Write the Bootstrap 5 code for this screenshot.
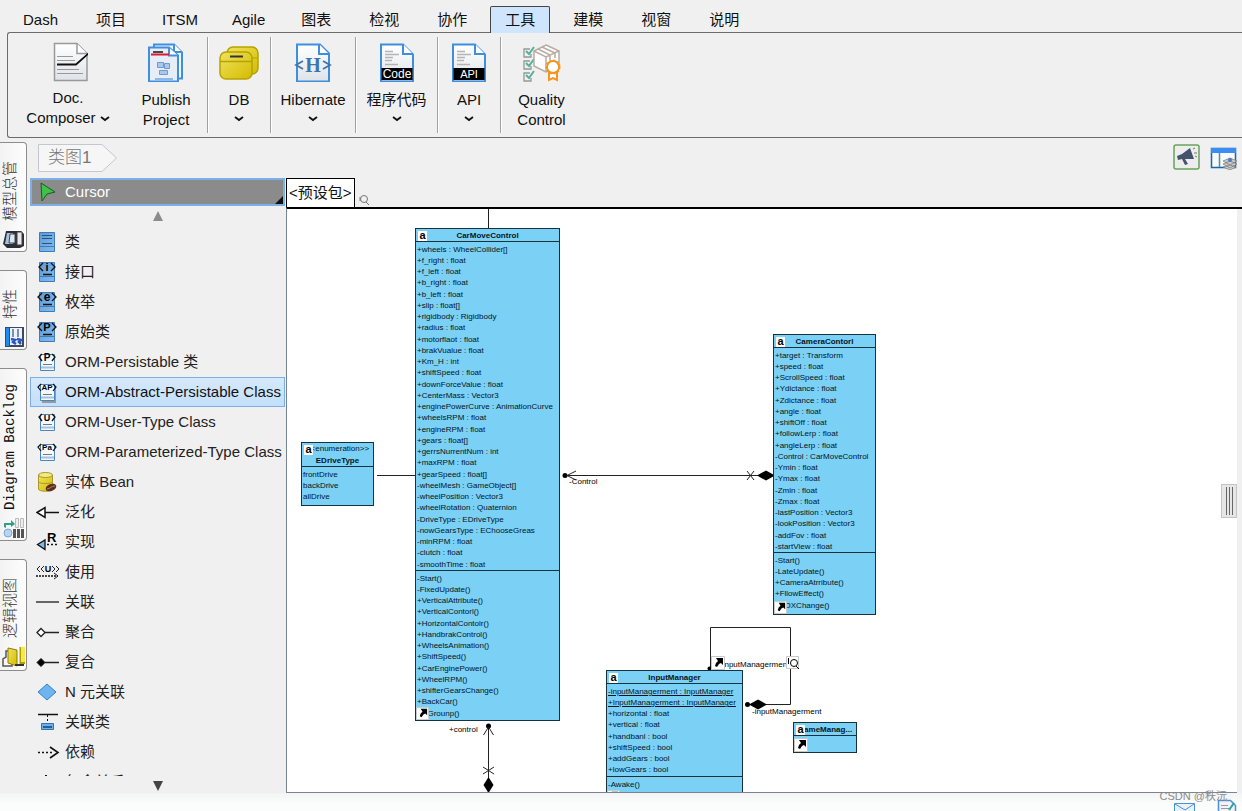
<!DOCTYPE html>
<html lang="zh-CN">
<head>
<meta charset="utf-8">
<meta name="viewport" content="width=device-width, initial-scale=1">
<title>类图1</title>
<link href="https://cdn.jsdelivr.net/npm/bootstrap@5.3.0/dist/css/bootstrap.min.css" rel="stylesheet">
<style>
  body { font-family: "Liberation Sans", "Noto Sans CJK SC", sans-serif; font-size: 15px; line-height: 20px; color: #111; background: #f0f0f0; }
  button { color: inherit; }
  .fill { min-height: 0; min-width: 0; }

  /* menu bar */
  .menubar { height: 33px; padding: 6px 8px 0; position: relative; z-index: 1; }
  .menu-btn { border: 1px solid transparent; border-bottom: 0; background: none; padding: 3px 14px; height: 27px; line-height: 20px; }
  .menu-btn.tight { padding: 3px 12px; }
  .menu-btn.active { background: #cfe5fd; border-color: #444; border-radius: 2px 2px 0 0; }

  /* ribbon */
  .ribbon { height: 106px; margin: -1px 0 0 7px; border: 1px solid #6b6b6b; border-right: 0; border-radius: 3px 0 0 3px; }
  .tool-group { margin: 4px 0; border-right: 1px solid #a0a0a0; box-shadow: 1px 0 #fff; }
  .tool-group:last-child { border: 0; box-shadow: none; }
  .tool { border: 0; background: none; padding: 5px 0 0; }
  .tool svg { display: block; margin: 0 auto 8px; }
  .tool .chev { display: inline-block; margin: 0; vertical-align: 2px; }
  .tool-s { width: 62px; } .tool-m { width: 81px; } .tool-l { width: 84px; }
  .tool-doc { width: 120px; } .tool-doc svg.pic { margin-bottom: 6px; }
  .tool-doc .chev { vertical-align: 0; }
  .tool-pub { width: 79px; padding-right: 3px; }

  /* side tabs */
  .side { width: 30px; padding-top: 4px; gap: 18px; }
  .side-tab { width: 27px; border: 1px solid #8c8c8c; border-left: 0; border-radius: 0 4px 4px 0; background: linear-gradient(90deg, #f3f3f3, #fdfdfd); padding: 18px 0 0; display: flex; flex-direction: column; justify-content: flex-end; align-items: center; color: #333; }
  .side-tab.long { padding-top: 15px; }
  .side-tab span { writing-mode: vertical-rl; text-orientation: sideways; transform: rotate(180deg); line-height: 20px; margin-right: 6px; font-weight: 300; }
  .side-tab svg { margin: 8px 0 2px; flex: none; }
  .side-tab .latin { font-family: "Liberation Mono", monospace; font-size: 14px; font-weight: 400; color: #111; }

  /* palette */
  .palette { width: 256px; padding-right: 1px; min-height: 0; }
  .cursor-btn { height: 28px; border: 2px solid #7cafe8; background: #8b8b8b; color: #fff; padding: 0 0 0 4px; position: relative; }
  .cursor-btn::after { content: ""; position: absolute; right: 0; bottom: 0; border: 4px solid #111; border-top-color: transparent; border-left-color: transparent; }
  .palette-list { min-height: 0; overflow: hidden; }
  .palette-item { height: 30px; flex: none; border: 1px solid transparent; background: none; padding: 0 0 0 5px; gap: 5px; text-align: left; white-space: nowrap; color: #222; }
  .palette-item.active { background: linear-gradient(#d6e9fc, #c3dffb); border-color: #7cafe8; color: #111; }
  .palette svg text { font-weight: 700; }

  /* header of the drawing area */
  .crumb-row { height: 40px; padding: 6px 5px 0 8px; }
  .crumb { width: 80px; height: 28px; color: #777; font-size: 17px; line-height: 28px; padding-left: 10px; text-decoration: none; position: relative; }
  .crumb svg { position: absolute; inset: 0; }
  .crumb span { position: relative; font-weight: 300; }
  .pkg-tab { border: 1px solid #000; border-bottom: 0; background: #fff; height: 29px; padding: 0 2px; line-height: 28px; }
  .stage { border: 1px solid #7a8594; border-top: 2px solid #000; border-right: 0; background: #fff; overflow: hidden; position: relative; }
  .strip { width: 5px; background: #f0f0f0; border-top: 2px solid #000; }
  .grip { position: absolute; right: 0; top: 275px; width: 16px; height: 34px; background: #e6e6e6; border: 1px solid #c4c4c4; display: flex; justify-content: center; gap: 2px; padding: 2px; }
  .grip i { width: 1px; background: #666; }

  /* class diagram */
  .wires { position: absolute; left: 0; top: 0; overflow: visible; }
  .wires text { font-size: 8px; fill: #000; }
  .uml { position: absolute; background: #7ad0f5; border: 1px solid #17323f; font-size: 8px; line-height: 11px; color: #04151f; }
  .uml h2 { font-size: 8px; font-weight: 700; line-height: 14px; height: 13px; margin: 0; text-align: center; border-bottom: 1px solid #17323f; }
  .uml h2.typed { height: 24px; line-height: 12px; }
  .uml h2 small { display: block; font-size: 8px; font-weight: 400; }
  .uml ul { list-style: none; margin: 0; padding: 2px 1px 0; white-space: nowrap; }
  .uml ul + ul { border-top: 1px solid #17323f; }
  .uml li { height: 11px; }
  .uml li:nth-child(4n) { height: 12px; }
  .tag { position: absolute; left: 2px; top: 2px; width: 9px; height: 10px; background: #fff; color: #000; font: 700 11px/9px "Liberation Sans", sans-serif; text-align: center; }
  .jump { position: absolute; left: 0; bottom: 0; }
  #car { left: 128px; top: 19px; width: 145px; padding-bottom: 1px; }
  #camera { left: 486px; top: 125px; width: 103px; padding-bottom: 3px; }
  #input { left: 319px; top: 461px; width: 137px; padding-bottom: 13px; }
  #drive { left: 14px; top: 233px; width: 73px; padding-bottom: 3px; }
  #game { left: 506px; top: 513px; width: 64px; height: 31px; }

  /* status bar */
  .statusbar { height: 18px; flex: none; background: linear-gradient(#f4f4f4, #fbfcfc 60%); position: relative; }
  .statusbar .pics { position: absolute; right: 3px; top: 6px; gap: 21px; }
  .credit { position: absolute; right: 15px; top: -5px; font-size: 11px; line-height: 16px; color: #8a8a8a; }
</style>
</head>
<body class="vh-100 d-flex flex-column overflow-hidden">

<svg class="position-absolute" width="0" height="0" aria-hidden="true">
  <defs>
    <linearGradient id="gPage" x1="0" y1="0" x2="0" y2="1"><stop offset="0" stop-color="#fff"/><stop offset="1" stop-color="#dfe3e8"/></linearGradient>
    <linearGradient id="gBlue" x1="0" y1="0" x2="1" y2="1"><stop offset="0" stop-color="#5b9ad6"/><stop offset="1" stop-color="#86bcec"/></linearGradient>
    <linearGradient id="gYellow" x1="0" y1="0" x2="1" y2="1"><stop offset="0" stop-color="#efe25e"/><stop offset="1" stop-color="#d4bc00"/></linearGradient>
    <symbol id="box" viewBox="0 0 24 24"><path d="M3.5 2.5h15v19h-15z" fill="url(#gBlue)" stroke="#3c7cbc"/><path d="M4 16.500h14" stroke="#3c7cbc"/></symbol>
    <symbol id="orm" viewBox="0 0 24 24"><path d="M4.500 4.500h14v16h-14z" fill="#f4f8fc" stroke="#4d86bd"/><path d="M5 17.500h13" stroke="#9dc3e6" stroke-width="2"/><path d="M7 14.500h9" stroke="#777"/></symbol>
    <symbol id="chev" viewBox="0 0 10 8"><path d="M1 2l4 3 4-3" fill="none" stroke="#111" stroke-width="1.800"/></symbol>
    <symbol id="jump" viewBox="0 0 14 14"><path d="M.5.5h13v13H.5z" fill="#fff" stroke="#c8c8c8"/><path d="M5 2h7v7l-2-2-2 1-2 3-2-1 1-3 2-2z"/></symbol>
  </defs>
</svg>

<nav class="menubar d-flex gap-2 flex-shrink-0">
  <button class="menu-btn">Dash</button><button class="menu-btn">项目</button><button class="menu-btn tight">ITSM</button><button class="menu-btn tight">Agile</button><button class="menu-btn">图表</button><button class="menu-btn">检视</button><button class="menu-btn">协作</button><button class="menu-btn active">工具</button><button class="menu-btn">建模</button><button class="menu-btn">视窗</button><button class="menu-btn">说明</button>
</nav>

<header class="ribbon d-flex flex-shrink-0">
  <div class="tool-group d-flex align-items-start">
    <button class="tool tool-doc">
      <svg class="pic" width="40" height="40"><path d="M6.500 1.500H29l10 10v27H6.500z" fill="url(#gPage)" stroke="#999" stroke-width="1.500"/><path d="M29 1.500v10h10" fill="#fff" stroke="#999" stroke-width="1.500"/><path d="M9 14.500h16M9 18.500h18M9 27.500h22M9 31.500h26" stroke="#999"/><path d="M9 22.500h19L41 11" fill="none" stroke="#111" stroke-width="1.800"/></svg>
      Doc.<br>Composer <svg class="chev" width="10" height="8"><use href="#chev"/></svg>
    </button>
    <button class="tool tool-pub">
      <svg width="40" height="40"><path d="M8 2.500h20l8 8v26H8z" fill="#f2f6fb" stroke="#3f8fdf" stroke-width="2"/><path d="M28 2v8h8" fill="#fff" stroke="#3f8fdf" stroke-width="2"/><path d="M3 5.500h20l9 8v26H3z" fill="#e6edf6" stroke="#3f8fdf" stroke-width="2"/><path d="M23 5.500v8h9" fill="#fff" stroke="#3f8fdf" stroke-width="2"/><path d="M5 12.500h18" stroke="#e0182d" stroke-width="2"/><path d="M7 10h10" stroke="#111" stroke-width="1.500"/><path d="M11.500 20.500h6v5h-6zM18.500 21.500h5v5h-5zM13.500 28.500h8v4h-8z" fill="#a9c8ea" stroke="#6d9bd0"/><path d="M9 37h18" stroke="#8db8e4" stroke-width="2"/></svg>
      Publish<br>Project
    </button>
  </div>
  <div class="tool-group d-flex align-items-start"><button class="tool tool-s">
    <svg width="40" height="40"><rect x="8" y="5" width="31" height="27" rx="6" fill="url(#gYellow)" stroke="#b7a300" stroke-width="1.500"/><path d="M8 16h30" stroke="#b7a300"/><rect x="1" y="10" width="32" height="27" rx="6" fill="url(#gYellow)" stroke="#b7a300" stroke-width="1.500"/><path d="M1 19.500h32" stroke="#b7a300" stroke-width="1.500"/><path d="M11 14.500h13" stroke="#333" stroke-width="2"/></svg>
    DB<br><svg class="chev" width="10" height="8"><use href="#chev"/></svg></button></div>
  <div class="tool-group d-flex align-items-start"><button class="tool tool-l">
    <svg width="40" height="40"><path d="M4 2.500h23l9 9v28H4z" fill="url(#gPage)" stroke="#3f8fdf" stroke-width="2"/><path d="M26 2v10h10" fill="#fff" stroke="#3f8fdf" stroke-width="2"/><text x="20" y="30" text-anchor="middle" font-family="Liberation Serif, serif" font-weight="700" font-size="20" fill="#3f74ad">H</text><path d="M10 19l-7 4 7 4M30 19l7 4-7 4" fill="none" stroke="#3f74ad" stroke-width="1.800"/></svg>
    Hibernate<br><svg class="chev" width="10" height="8"><use href="#chev"/></svg></button></div>
  <div class="tool-group d-flex align-items-start"><button class="tool tool-m">
    <svg width="40" height="40"><path d="M4 2.500h22l10 10v27H4z" fill="url(#gPage)" stroke="#3f8fdf" stroke-width="2"/><path d="M26 2v10h10" fill="#fff" stroke="#3f8fdf" stroke-width="2"/><path d="M8 9.500h8M8 12.500h14M8 15.500h8M8 18.500h7M8 22.500h13" stroke="#b4b4b4" stroke-width="1.500"/><path d="M4.500 26h31v12h-31z"/><text x="20" y="36" text-anchor="middle" font-size="12" fill="#fff">Code</text></svg>
    程序代码<br><svg class="chev" width="10" height="8"><use href="#chev"/></svg></button></div>
  <div class="tool-group d-flex align-items-start"><button class="tool tool-s">
    <svg width="40" height="40"><path d="M4 2.500h22l10 10v27H4z" fill="url(#gPage)" stroke="#3f8fdf" stroke-width="2"/><path d="M26 2v10h10" fill="#fff" stroke="#3f8fdf" stroke-width="2"/><path d="M8 9.500h8M8 12.500h14M8 15.500h8M8 18.500h7M8 22.500h13" stroke="#b4b4b4" stroke-width="1.500"/><path d="M4.500 26h31v12h-31z"/><text x="20" y="36" text-anchor="middle" font-size="11" fill="#fff">API</text></svg>
    API<br><svg class="chev" width="10" height="8"><use href="#chev"/></svg></button></div>
  <div class="tool-group d-flex align-items-start"><button class="tool tool-m">
    <svg width="40" height="40" fill="none"><g stroke="#8f9a97" stroke-width="1.300"><path d="M8 7H2v8h7v-3M8 19H2v8h7v-3M8 31H2v8h7v-3"/></g><g stroke="#55b09a" stroke-width="2"><path d="M4 9l3 3 5-7M4 21l3 3 5-7M4 33l3 3 5-7"/></g><g fill="#fff" stroke="#b9aca4" stroke-width="1.500"><path d="M24 3l13 6v15l-13 6-12-6V9z"/><path d="M12 9l12 6 13-6M24 15v14M16 7l12 6M20 5l13 6M28 13v5M33 11v5" fill="none"/></g><path d="M27 30v8l4-2 4 2v-8z" fill="#fff" stroke="#f7941d" stroke-width="2"/><circle cx="31" cy="25" r="6" fill="#fff" stroke="#f7941d" stroke-width="1.800"/><circle cx="31" cy="25" r="6.800" stroke="#f7941d" stroke-width="1.500" stroke-dasharray="2 2"/></svg>
    Quality<br>Control</button></div>
</header>

<main class="d-flex flex-grow-1 fill">
  <aside class="side d-flex flex-column flex-shrink-0 align-items-start">
    <button class="side-tab"><span>模型总管</span>
      <svg width="24" height="20"><path d="M5 2h15l3 3v12l-4 2H6l-4-4z" fill="#2b2f38"/><path d="M6 4h6v11H4z" fill="#a8c2de"/><path d="M9 5h5v9H8z" fill="#dbe8f5" stroke="#444"/><path d="M16 3h5v13h-5z" fill="#e9e9e9" stroke="#444"/></svg></button>
    <button class="side-tab"><span>特性</span>
      <svg width="24" height="20"><path d="M4 0h19v20H4z" fill="#3c4a60"/><path d="M5 1h3v18H5z" fill="#1d8bf0"/><path d="M9 1h12v17H9z" fill="#eef3fb"/><path d="M12 2v8M17 2v8" stroke="#7d8fb0" stroke-width="2"/><path d="M10 12l4 1-2 2 3 2M16 12l4 1-2 2 2 2" fill="none" stroke="#2b55c0" stroke-width="2.500"/></svg></button>
    <button class="side-tab long"><span class="latin">Diagram Backlog</span>
      <svg width="24" height="20"><path d="M3 9V5h7V2l4 4-4 3V7H5v3z" fill="#2aa38c"/><path d="M14.500.5h3v9h-3zM19.500.5h3v9h-3z" fill="#eee" stroke="#bbb"/><circle cx="7" cy="15" r="4" fill="#b9d3f2" stroke="#7ba5d6"/><path d="M12 11h3v9h-3zM16 11h3v9h-3zM20 11h3v9h-3z" fill="#555"/></svg></button>
    <button class="side-tab"><span>逻辑视图</span>
      <svg width="24" height="22"><path d="M2 19v-6l3-2V5h6v15H2z" fill="#fafafa" stroke="#555" stroke-width="1.500"/><path d="M7 2l9 2v16l-9-3z" fill="url(#gYellow)" stroke="#8e7e00"/><path d="M14 19h9" stroke="#333" stroke-width="2"/><path d="M19.500 1v16H24" fill="none" stroke="#b59c00" stroke-width="2"/><path d="M20 1h4v15h-4z" fill="#f4e84c"/></svg></button>
  </aside>

  <div class="d-flex flex-column flex-grow-1 fill">
    <div class="crumb-row d-flex justify-content-between align-items-start flex-shrink-0">
      <a href="#" class="crumb"><svg width="80" height="28"><path d="M.5.5H64L78.500 14 64 27.500H.5z" fill="#f6f6f6" stroke="#c4c8cc"/></svg><span>类图1</span></a>
      <div class="d-flex gap-2">
        <button class="border-0 bg-transparent p-0" aria-label="通知"><svg width="29" height="26"><rect x="1" y="1" width="25" height="24" rx="2" fill="#ededed" stroke="#67a35c" stroke-width="1.500"/><path d="M4 12l5-2 8-6 4 11-9 0 3 5-3 1-3-6-4 1z" fill="#45536a"/><path d="M20 5l2-1M21 9l3 0M22 12l2 1" stroke="#777"/></svg></button>
        <button class="border-0 bg-transparent p-0" aria-label="面板"><svg width="27" height="26"><path d="M1.500 4.500h24v19h-24z" fill="#f7f9fb" stroke="#176aa0" stroke-width="1.500"/><path d="M1 4h25v5H1z" fill="#3a8df2"/><path d="M9.500 9v14" stroke="#4493a8" stroke-width="1.500"/><path d="M13 20l7-3 7 3-7 4zM13 17l7-3 7 3-7 4zM13 23l7-2 6 2-6 3z" fill="#c9c9c9" stroke="#777" stroke-width=".7"/><circle cx="20" cy="16" r="2" fill="#4c7cc4"/></svg></button>
      </div>
    </div>

    <div class="d-flex flex-grow-1 fill">
      <div class="palette d-flex flex-column flex-shrink-0">
        <button class="cursor-btn d-flex align-items-center gap-2 text-start"><svg width="21" height="24"><path d="M5 3l14 9-8 2-5 7z" fill="#3fc24a" stroke="#1c5a22"/></svg>Cursor</button>
        <button class="border-0 bg-transparent p-0 flex-shrink-0 d-flex justify-content-center" aria-label="上"><svg width="12" height="21"><path d="M6 5l5 10H1z" fill="#8c8c8c"/></svg></button>
        <div class="palette-list d-flex flex-column flex-grow-1">
          <button class="palette-item d-flex align-items-center"><svg width="24" height="24"><use href="#box"/><path d="M6 5.500h10M6 8.500h10M6 13.500h10" stroke="#25527f"/></svg>类</button>
          <button class="palette-item d-flex align-items-center"><svg width="24" height="24"><use href="#box"/><path d="M7 3L3 7l4 4M15 3l4 4-4 4M7 14.500h9" fill="none" stroke="#111" stroke-width="1.300"/><text x="11" y="11" text-anchor="middle" font-size="11">i</text></svg>接口</button>
          <button class="palette-item d-flex align-items-center"><svg width="24" height="24"><use href="#box"/><path d="M6 3L2 7l4 4M16 3l4 4-4 4M7 14.500h9" fill="none" stroke="#111" stroke-width="1.300"/><text x="11" y="11" text-anchor="middle" font-size="12">e</text></svg>枚举</button>
          <button class="palette-item d-flex align-items-center"><svg width="24" height="24"><use href="#box"/><path d="M6 3L2 7l4 4M16 3l4 4-4 4M7 14.500h9" fill="none" stroke="#111" stroke-width="1.300"/><text x="11" y="11" text-anchor="middle" font-size="11">P</text></svg>原始类</button>
          <button class="palette-item d-flex align-items-center"><svg width="24" height="24"><use href="#orm"/><path d="M6 4L3 7l3 4M16 4l3 3-3 4" fill="none" stroke="#111" stroke-width="1.300"/><text x="11" y="11" text-anchor="middle" font-size="10">P</text></svg>ORM-Persistable 类</button>
          <button class="palette-item active d-flex align-items-center"><svg width="24" height="24"><path d="M6 6h14v17H6z" fill="#999"/><use href="#orm"/><path d="M5 4L2 7l3 4M17 4l3 3-3 4" fill="none" stroke="#111" stroke-width="1.200"/><text x="11" y="10" text-anchor="middle" font-size="8">AP</text></svg>ORM-Abstract-Persistable Class</button>
          <button class="palette-item d-flex align-items-center"><svg width="24" height="24"><use href="#orm"/><path d="M6 4L3 7l3 4M16 4l3 3-3 4" fill="none" stroke="#111" stroke-width="1.300"/><text x="11" y="11" text-anchor="middle" font-size="9">U</text></svg>ORM-User-Type Class</button>
          <button class="palette-item d-flex align-items-center"><svg width="24" height="24"><use href="#orm"/><path d="M5 4L2 7l3 4M17 4l3 3-3 4" fill="none" stroke="#111" stroke-width="1.200"/><text x="11" y="10" text-anchor="middle" font-size="8">Pa</text></svg>ORM-Parameterized-Type Class</button>
          <button class="palette-item d-flex align-items-center"><svg width="24" height="24"><path d="M2.500 5v14c0 3 14 3 14 0V5" fill="url(#gYellow)" stroke="#a8972a"/><ellipse cx="9.500" cy="5" rx="7" ry="2.500" fill="#f3ea82" stroke="#a8972a"/><path d="M3 12c0 2 13 2 13 0" fill="none" stroke="#a8972a"/><ellipse cx="15" cy="17.500" rx="5.500" ry="3.500" transform="rotate(-20 15 17.500)" fill="#5c2f1c"/><path d="M11 19c3 0 4-3 8-3" stroke="#c49078" fill="none" stroke-width=".8"/></svg>实体 Bean</button>
          <button class="palette-item d-flex align-items-center"><svg width="24" height="24"><path d="M1 12.500l8-5v10zM9 12.500h14" fill="#fff" stroke="#111" stroke-width="1.500"/></svg>泛化</button>
          <button class="palette-item d-flex align-items-center"><svg width="24" height="24"><path d="M1.500 14.500L9 10v9.500z" fill="#7fb9ea" stroke="#111" stroke-width="1.300"/><path d="M11 14.500h12" stroke="#111" stroke-width="1.500" stroke-dasharray="2 2"/><text x="11" y="12" font-size="13">R</text></svg>实现</button>
          <button class="palette-item d-flex align-items-center"><svg width="24" height="24"><path d="M4 6L1 9l3 3M8 6L5 9l3 3M16 6l3 3-3 3M20 6l3 3-3 3M18 13l4 3-4 3" fill="none" stroke="#222"/><path d="M0 16h22" stroke="#111" stroke-width="1.500" stroke-dasharray="2 1"/><text x="12" y="12" text-anchor="middle" font-size="9">U</text></svg>使用</button>
          <button class="palette-item d-flex align-items-center"><svg width="24" height="24"><path d="M0 12h23" stroke="#555" stroke-width="1.800"/></svg>关联</button>
          <button class="palette-item d-flex align-items-center"><svg width="24" height="24"><path d="M9 12.500h14" stroke="#222" stroke-width="1.500"/><path d="M1 12.500l4-4 4 4-4 4z" fill="#fff" stroke="#222" stroke-width="1.300"/></svg>聚合</button>
          <button class="palette-item d-flex align-items-center"><svg width="24" height="24"><path d="M9 12.500h14" stroke="#222" stroke-width="1.500"/><path d="M1 12.500l4-4 4 4-4 4z" stroke="#111"/></svg>复合</button>
          <button class="palette-item d-flex align-items-center"><svg width="24" height="24"><path d="M2 12l9-8 9 8-9 8z" fill="#6fb4f0" stroke="#2f84cb"/></svg>N 元关联</button>
          <button class="palette-item d-flex align-items-center"><svg width="24" height="24"><path d="M2 4.500h20" stroke="#111" stroke-width="1.500"/><path d="M11.500 5v9" stroke="#111" stroke-dasharray="2 2"/><path d="M5.500 13.500h12v6h-12z" fill="#6db0e8" stroke="#2f74b5"/><path d="M7 17h9" stroke="#2a5c8f" stroke-width="2"/></svg>关联类</button>
          <button class="palette-item d-flex align-items-center"><svg width="24" height="24"><path d="M2 12.500h14" stroke="#111" stroke-width="1.500" stroke-dasharray="2 2"/><path d="M14 7l8 5.500-8 5.500" fill="none" stroke="#111" stroke-width="1.600"/></svg>依赖</button>
          <button class="palette-item d-flex align-items-center"><svg width="24" height="24"><path d="M10 5v8M5 9h10" stroke="#111" stroke-width="2"/></svg>包含关系</button>
        </div>
        <button class="border-0 bg-transparent p-0 flex-shrink-0 d-flex justify-content-center" aria-label="下"><svg width="12" height="17"><path d="M6 15L1 5h10z" fill="#444"/></svg></button>
      </div>

      <div class="d-flex flex-column flex-grow-1 fill">
        <div class="d-flex align-items-end flex-shrink-0">
          <button class="pkg-tab">&lt;预设包&gt;</button>
          <svg width="20" height="14"><circle cx="9" cy="6" r="3.500" fill="none" stroke="#777"/><path d="M11 9l3 3M5 4v4" stroke="#777"/></svg>
        </div>
        <div class="d-flex flex-grow-1 fill">
          <div class="stage flex-grow-1">
            <svg class="wires" width="949" height="583" viewBox="287 209 949 583" fill="none" stroke="#222">
              <path d="M488.500 209v20M377 475.500h39M568 475.500h190M488.500 727v52"/>
              <circle cx="565" cy="475.500" r="2.500" fill="#000" stroke="none"/><path d="M576 471l-9 4.500 9 4.500M747 471l7 9M754 471l-7 9"/>
              <path d="M757 475.500l9-5 9 5-9 5z" fill="#000" stroke="none"/>
              <circle cx="488.500" cy="726" r="2.500" fill="#000" stroke="none"/><path d="M483.500 735l5-8 5 8M483 767l11 7M494 767l-11 7"/>
              <path d="M488.500 777l5 8-5 8-5-8z" fill="#000" stroke="none"/>
              <path d="M710.500 669v-41.500h80v77H765"/><circle cx="709.500" cy="668.500" r="2" fill="#000" stroke="none"/><circle cx="747.500" cy="704.500" r="2.500" fill="#000" stroke="none"/>
              <path d="M749 704.500l9-5 9 5-9 5z" fill="#000" stroke="none"/>
              <g stroke="none"><text x="569" y="484">-Control</text><text x="449" y="732">+control</text><text x="718" y="667">+inputManagerment</text><text x="752" y="714">-inputManagerment</text></g>
              <use href="#jump" x="711" y="656" width="14" height="14" fill="#000" stroke="none"/>
              <path d="M786.500 656.500h12v12h-12z" fill="#fff" stroke="#c8c8c8"/><circle cx="794" cy="663" r="3.500" stroke="#000"/><path d="M788.500 658v6M796 666l3 3" stroke="#000"/>
            </svg>

            <section class="uml" id="drive"><h2 class="typed"><small>&lt;&lt;enumeration&gt;&gt;</small>EDriveType</h2><span class="tag">a</span>
              <ul><li>frontDrive</li><li>backDrive</li><li>allDrive</li></ul></section>

            <section class="uml" id="car"><h2>CarMoveControl</h2><span class="tag">a</span>
              <ul>
                <li>+wheels : WheelCollider[]</li><li>+f_right : float</li><li>+f_left : float</li><li>+b_right : float</li><li>+b_left : float</li><li>+slip : float[]</li><li>+rigidbody : Rigidbody</li><li>+radius : float</li><li>+motorflaot : float</li><li>+brakVualue : float</li><li>+Km_H : int</li><li>+shiftSpeed : float</li><li>+downForceValue : float</li><li>+CenterMass : Vector3</li><li>+enginePowerCurve : AnimationCurve</li><li>+wheelsRPM : float</li><li>+engineRPM : float</li><li>+gears : float[]</li><li>+gerrsNurrentNum : int</li><li>+maxRPM : float</li><li>+gearSpeed : float[]</li><li>-wheelMesh : GameObject[]</li><li>-wheelPosition : Vector3</li><li>-wheelRotation : Quaternion</li><li>-DriveType : EDriveType</li><li>-nowGearsType : EChooseGreas</li><li>-minRPM : float</li><li>-clutch : float</li><li>-smoothTime : float</li>
              </ul>
              <ul>
                <li>-Start()</li><li>-FixedUpdate()</li><li>+VerticalAttribute()</li><li>+VerticalContorl()</li><li>+HorizontalContolr()</li><li>+HandbrakControl()</li><li>+WheelsAnimation()</li><li>+ShiftSpeed()</li><li>+CarEnginePower()</li><li>+WheelRPM()</li><li>+shifterGearsChange()</li><li>+BackCar()</li><li>+isGrounp()</li>
              </ul><svg class="jump" width="13" height="13"><use href="#jump"/></svg></section>

            <section class="uml" id="camera"><h2>CameraContorl</h2><span class="tag">a</span>
              <ul>
                <li>+target : Transform</li><li>+speed : float</li><li>+ScrollSpeed : float</li><li>+Ydictance : float</li><li>+Zdictance : float</li><li>+angle : float</li><li>+shiftOff : float</li><li>+followLerp : float</li><li>+angleLerp : float</li><li>-Control : CarMoveControl</li><li>-Ymin : float</li><li>-Ymax : float</li><li>-Zmin : float</li><li>-Zmax : float</li><li>-lastPosition : Vector3</li><li>-lookPosition : Vector3</li><li>-addFov : float</li><li>-startView : float</li>
              </ul>
              <ul><li>-Start()</li><li>-LateUpdate()</li><li>+CameraAtrribute()</li><li>+FllowEffect()</li><li>+FOXChange()</li></ul><svg class="jump" width="13" height="13"><use href="#jump"/></svg></section>

            <section class="uml" id="input"><h2>InputManager</h2><span class="tag">a</span>
              <ul><li><u>-inputManagerment : InputManager</u></li><li><u>+InputManagerment : InputManager</u></li><li>+horizontal : float</li><li>+vertical : float</li><li>+handbanl : bool</li><li>+shiftSpeed : bool</li><li>+addGears : bool</li><li>+lowGears : bool</li></ul>
              <ul><li>-Awake()</li></ul><svg class="jump" width="13" height="13"><use href="#jump"/></svg></section>

            <section class="uml" id="game"><h2>GameManag...</h2><span class="tag">a</span><svg class="jump" width="14" height="14"><use href="#jump"/></svg></section>

            <div class="grip"><i></i><i></i><i></i></div>
          </div>
          <div class="strip flex-shrink-0"></div>
        </div>
      </div>
    </div>
  </div>
</main>

<footer class="statusbar">
  <div class="pics d-flex">
    <svg width="22" height="12"><path d="M.5 4.500h20V14H.5z" fill="#eaf3fd" stroke="#4a90d9"/><path d="M1 5l10 6 9-6" fill="none" stroke="#4a90d9"/></svg>
    <svg width="22" height="12"><path d="M1.500 1.500h12l5 5V14h-17z" fill="#f3f3f3" stroke="#4a90d9" stroke-width="1.500"/><path d="M4 6.500h7M4 9.500h9" stroke="#999"/><path d="M12 11l5-7" stroke="#2aa0a8" stroke-width="2"/></svg>
  </div>
  <span class="credit">CSDN @秩沅</span>
</footer>

<script src="https://cdn.jsdelivr.net/npm/bootstrap@5.3.0/dist/js/bootstrap.bundle.min.js"></script>
</body>
</html>
